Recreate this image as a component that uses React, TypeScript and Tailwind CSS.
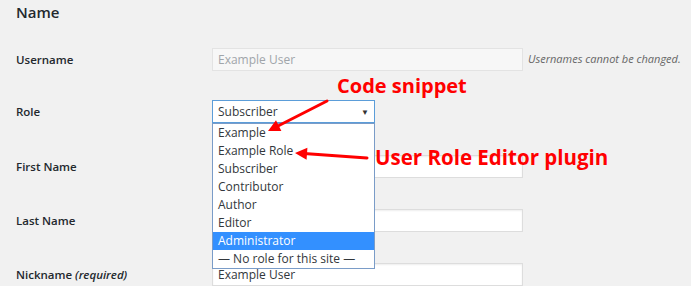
import React from "react";

const font = { fontFamily: '"Open Sans", "Noto Sans", sans-serif' };

const roles = [
  "Example",
  "Example Role",
  "Subscriber",
  "Contributor",
  "Author",
  "Editor",
  "Administrator",
  "— No role for this site —",
];

function Row({ label, top, children }: { label: React.ReactNode; top: string; children: React.ReactNode }) {
  return (
    <div className={`flex items-center h-[23px] ${top}`}>
      <div className="w-[196px] shrink-0 text-[11.5px] font-semibold text-[#23282d]">{label}</div>
      {children}
    </div>
  );
}

function TextBox({ value }: { value?: string }) {
  return (
    <div className="w-[311px] h-[23px] bg-white border border-[#dddddd] shadow-[inset_0_1px_2px_rgba(0,0,0,0.07)] px-[5px] flex items-center text-[12px] text-[#32373c]">
      {value}
    </div>
  );
}

export default function App() {
  return (
    <div style={font} className="relative w-[691px] h-[286px] overflow-hidden bg-[#f1f1f1] pl-4">
      <h2 className="pt-[1px] text-[15px] leading-[22px] font-semibold text-[#23282d]">Name</h2>

      <Row label="Username" top="mt-[25px]">
        <div className="w-[311px] h-[23px] bg-[#f7f7f7] border border-[#e3e3e3] px-[5px] flex items-center text-[12px] text-[#a0a5aa]">
          Example User
        </div>
        <span className="ml-[5px] whitespace-nowrap text-[11px] italic text-[#666]">Usernames cannot be changed.</span>
      </Row>

      <Row label="Role" top="mt-[29px]">
        <div className="w-[163px] h-[23px] bg-white border border-[#5b9dd9] px-[5px] flex items-center justify-between text-[12px] text-[#32373c]">
          <span>Subscriber</span>
          <span className="text-[8px] text-[#333]">▼</span>
        </div>
      </Row>

      <Row label="First Name" top="mt-[32px]">
        <TextBox />
      </Row>

      <Row label="Last Name" top="mt-[31px]">
        <TextBox />
      </Row>

      <Row
        label={
          <>
            Nickname <span className="italic font-semibold">(required)</span>
          </>
        }
        top="mt-[31px]"
      >
        <TextBox value="Example User" />
      </Row>

      {/* open select list */}
      <div className="absolute left-[212px] top-[123px] w-[163px] bg-white border border-[#7a9cc8] text-[12px] text-[#32373c]">
        {roles.map((r) => (
          <div
            key={r}
            className={`h-[18px] leading-[18px] pl-[5px] ${r === "Administrator" ? "bg-[#3390ff] text-white" : ""}`}
          >
            {r}
          </div>
        ))}
      </div>

      {/* annotations */}
      <div className="absolute left-[337px] top-[72px] text-[20px] font-bold text-[#ff0000] leading-[28px]">Code snippet</div>
      <div className="absolute left-[375px] top-[143px] text-[20.5px] font-bold text-[#ff0000] leading-[28px]">
        User Role Editor plugin
      </div>
      <svg className="absolute left-0 top-0" width="691" height="286" viewBox="0 0 691 286">
        <line x1="327" y1="101" x2="276" y2="127" stroke="#ff0000" strokeWidth="3" strokeLinecap="round" />
        <polygon points="268,131 281.4,131 276,120.2" fill="#ff0000" />
        <line x1="367" y1="158" x2="304" y2="153.6" stroke="#ff0000" strokeWidth="3" strokeLinecap="round" />
        <polygon points="295,153 307.4,147.8 306.6,159.8" fill="#ff0000" />
      </svg>
    </div>
  );
}
